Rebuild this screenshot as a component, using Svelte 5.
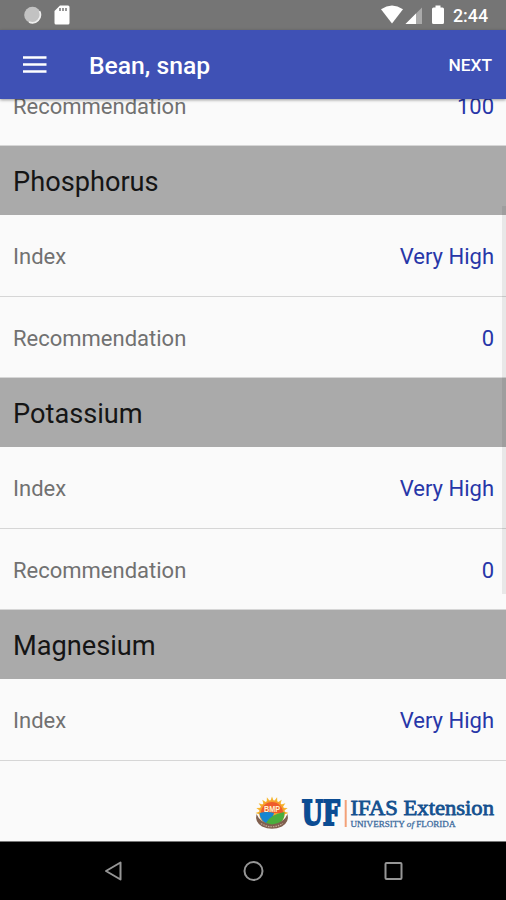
<script>
  const sections = [
    { title: 'Phosphorus', rows: [['Index', 'Very High'], ['Recommendation', '0']] },
    { title: 'Potassium', rows: [['Index', 'Very High'], ['Recommendation', '0']] },
    { title: 'Magnesium', rows: [['Index', 'Very High']] }
  ];
  const rays = Array.from({ length: 11 }, (_, i) => -90 + i * 18);
</script>

<div class="screen">
  <header class="status">
    <svg width="20" height="20" viewBox="0 0 20 20">
      <circle cx="9.5" cy="10" r="8.3" fill="#c2c2c2" />
      <path d="M16.5 6.2A8 8 0 0 1 6 17" fill="none" stroke="#eee" stroke-width="1.7" />
    </svg>
    <svg class="card" width="16" height="20" viewBox="0 0 16 20">
      <path d="M6 .5H14Q15.5 .5 15.5 2V18Q15.5 19.5 14 19.5H2Q.5 19.5 .5 18V6Z" fill="#fff" />
      <path d="M6 3v3M9 3v3M12 3v3" stroke="#777" stroke-width="1.5" />
    </svg>
    <div class="system">
      <svg width="64" height="20" viewBox="0 0 64 20">
        <path d="M0 4.2Q11-3 22 4.200L11 18.6Z" fill="#fff" />
        <path d="M24.5 19L41 2.5V19Z" fill="#aaa" />
        <path d="M24.5 19L35 8.5V19Z" fill="#fff" />
        <path d="M54.5 .5h5v2h2q1.5 0 1.5 1.5v13.5q0 1.5-1.5 1.5h-9q-1.5 0-1.5-1.5V4q0-1.5 1.5-1.5h2Z" fill="#fff" />
      </svg>
      <span class="time">2:44</span>
    </div>
  </header>

  <nav class="toolbar">
    <svg width="24" height="18" viewBox="0 0 24 18">
      <path d="M0 1.5h23.5M0 8.5h23.5M0 15.5h23.5" stroke="#fff" stroke-width="2.6" />
    </svg>
    <h1>Bean, snap</h1>
    <span class="next">NEXT</span>
  </nav>

  <main>
    <div class="row first"><span>Recommendation</span><span class="value">100</span></div>
    {#each sections as section}
      <h2>{section.title}</h2>
      {#each section.rows as [label, value]}
        <div class="row"><span>{label}</span><span class="value">{value}</span></div>
      {/each}
    {/each}
    <div class="scrollbar"></div>
  </main>

  <footer>
    <svg width="250" height="44" viewBox="250 790 250 44">
      <g transform="translate(272 813)">
        {#each rays as angle}
          <path d="M-2 -11L0 -16.5L2 -11Z" fill="#f6b52c" transform={`rotate(${angle})`} />
        {/each}
        <circle r="12.8" fill="#f5a02c" />
        <path d="M-11 0A11 11 0 0 1 11 0Z" fill="#ef5b2b" />
        <path d="M-12.5 0Q-5-2 2 0L-2 12Q-12 9-12.5 0Z" fill="#1786d2" />
        <path d="M-6 10Q-1 1 12.5-1Q13 10 2 13Z" fill="#4aae3d" />
        <path d="M-15.5 1Q-12 10 0 11.5Q12 10 15.5 1Q17.5 9 10 13.5Q0 18-10 13.5Q-17.5 9-15.5 1Z" fill="#80604f" />
        <path d="M-11 10.5Q0 17 11 10.5" fill="none" stroke="#c4aa98" stroke-width="1.2" stroke-dasharray="1.5 1" />
        <text x="-8" y="-1.5" class="badge" textLength="16" lengthAdjust="spacingAndGlyphs">BMP</text>
      </g>
      <text transform="translate(301.7 825) scale(1.16 1)" x="0" y="0" class="uf" textLength="33" lengthAdjust="spacingAndGlyphs">UF</text>
      <path d="M345.7 800V827" stroke="#f3a178" stroke-width="2" />
      <text x="350.5" y="815.3" class="brand" textLength="143.5" lengthAdjust="spacingAndGlyphs">IFAS Extension</text>
      <text x="350.5" y="827" class="university" textLength="105" lengthAdjust="spacingAndGlyphs">UNIVERSITY <tspan font-style="italic">of</tspan> FLORIDA</text>
    </svg>
  </footer>

  <div class="navigation">
    <svg width="20" height="22" viewBox="0 0 20 22"><path d="M17.5 2.5V19.5L3 11Z" /></svg>
    <svg width="22" height="22" viewBox="0 0 22 22"><circle cx="11.5" cy="11" r="9" /></svg>
    <svg width="20" height="22" viewBox="0 0 20 22"><rect x="2.5" y="3" width="16" height="16" rx="1" /></svg>
  </div>
</div>

<style>
  :global(body) { margin: 0; }
  .screen {
    width: 506px; height: 900px; display: flex; flex-direction: column;
    overflow: hidden; background: #fafafa; font-family: Roboto, sans-serif;
  }
  svg { display: block; flex: none; }
  .status { height: 30px; flex: none; display: flex; align-items: center; background: #757575; color: #fff; box-sizing: border-box; padding-left: 23px; }
  .card { margin-left: 11px; }
  .system { margin-left: auto; display: flex; align-items: center; padding-right: 18px; }
  .time { margin-left: 8px; font-size: 17.8px; font-weight: 500; line-height: 30px; padding-top: 1px; width: 35px; white-space: nowrap; }
  .toolbar { height: 69px; flex: none; display: flex; align-items: center; background: #3f51b5; color: #fff; padding: 0 14px 0 23px; position: relative; z-index: 1; box-shadow: 0 1px 3px rgba(0,0,0,.4); }
  .toolbar h1 { margin: 2px 0 0 42px; font-size: 24.7px; font-weight: 500; }
  .next { margin: 0 0 0 auto; font-size: 17.3px; font-weight: 500; }
  main { height: 662px; flex: none; position: relative; overflow: hidden; }
  .row { height: 81px; box-sizing: border-box; border-bottom: 1px solid #d6d6d6; padding: 2px 12px 0 13px; display: flex; align-items: center; justify-content: space-between; font-size: 22px; color: #717171; }
  h2 + .row { height: 82px; }
  .row.first { margin-top: -34px; }
  .value { color: #2736a8; }
  h2 { height: 69px; box-sizing: border-box; margin: 0; padding: 2px 13px 0; display: flex; align-items: center; background: #aaa; color: #151515; font-size: 27.2px; font-weight: 400; }
  .scrollbar { position: absolute; right: 0; top: 107px; width: 4px; height: 388px; background: rgba(0,0,0,.07); }
  footer { height: 80px; flex: none; border-bottom: 1px solid #777; display: flex; align-items: center; justify-content: flex-end; padding-right: 6px; }
  footer svg { margin-top: 22px; }
  .badge { font: bold 9px "Liberation Sans", sans-serif; fill: #fff1cd; }
  .uf { font: bold 33px "DejaVu Serif", serif; fill: #0b4c93; stroke: #0b4c93; stroke-width: 2; }
  .brand { font: 22px "Liberation Serif", serif; fill: #14518f; stroke: #14518f; stroke-width: .8; }
  .university { font: 9px "Liberation Serif", serif; fill: #3e6c9e; stroke: #3e6c9e; stroke-width: .3; }
  .navigation { flex: 1; background: #000; display: flex; align-items: center; justify-content: space-between; padding: 0 103px; }
  .navigation path, .navigation circle, .navigation rect { fill: none; stroke: #969696; stroke-width: 2; stroke-linejoin: round; }
</style>
